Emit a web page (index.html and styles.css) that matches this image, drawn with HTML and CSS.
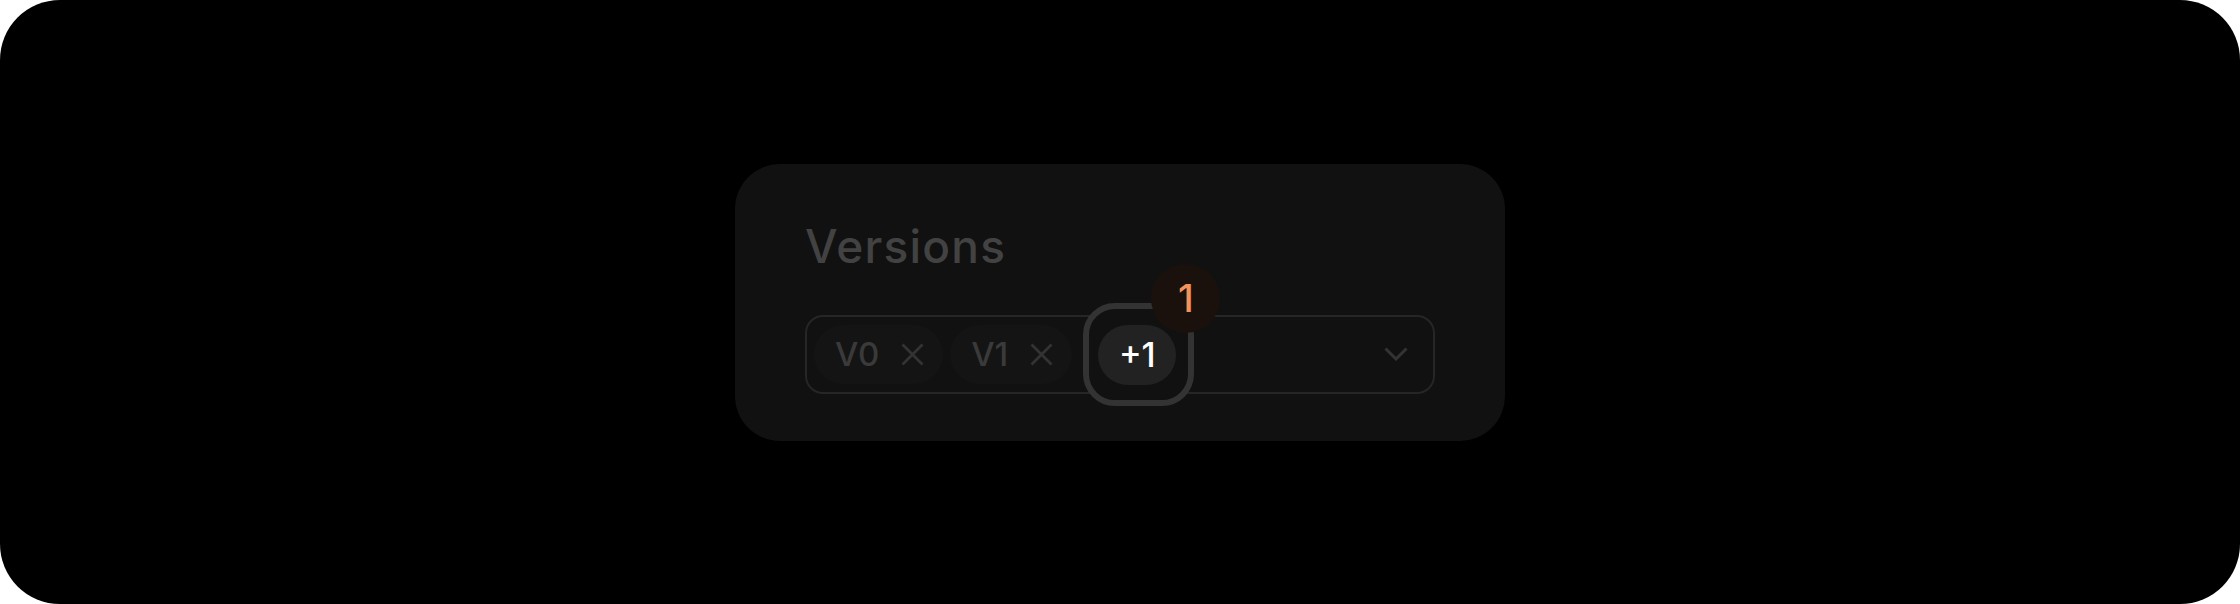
FILE: index.html
```html
<!DOCTYPE html>
<html lang="en">
<head>
<meta charset="utf-8">
<title>Versions</title>
<link rel="stylesheet" href="styles.css">
</head>
<body>
<div class="frame">
  <div class="card">
    <div class="title">Versions</div>
    <div class="field">
      <div class="chip">
        <span class="chip-label">V0</span>
        <svg class="chip-x" width="23" height="23" viewBox="0 0 23 23"><path d="M1.5 1.5 L21.5 21.5 M21.5 1.5 L1.5 21.5"/></svg>
      </div>
      <div class="chip">
        <span class="chip-label">V1</span>
        <svg class="chip-x" width="23" height="23" viewBox="0 0 23 23"><path d="M1.5 1.5 L21.5 21.5 M21.5 1.5 L1.5 21.5"/></svg>
      </div>
      <div class="more-ring">
        <div class="more">+1</div>
        <div class="badge">1</div>
      </div>
      <svg class="chevron" width="24" height="14" viewBox="0 0 24 14"><polyline points="1.5,1.5 12,12 22.5,1.5"/></svg>
    </div>
  </div>
</div>
</body>
</html>
```
FILE: styles.css
```css
html, body {
  margin: 0;
  padding: 0;
  background: #ffffff;
}
body {
  font-family: "Inter", "Noto Sans", sans-serif;
}
.frame {
  width: 2240px;
  height: 604px;
  background: #000000;
  border-radius: 60px;
  display: flex;
  align-items: center;
  justify-content: center;
}
.card {
  box-sizing: border-box;
  width: 770px;
  height: 277px;
  background: #111111;
  border-radius: 45px;
  padding: 54px 70px 47px 70px;
}
.title {
  font-size: 46px;
  font-weight: 500;
  line-height: 56px;
  color: #424242;
  letter-spacing: 1.2px;
  margin-bottom: 41px;
}
.field {
  box-sizing: border-box;
  height: 79px;
  border: 2px solid #262626;
  border-radius: 18px;
  display: flex;
  align-items: center;
  padding: 0 25px 0 7px;
}
.chip {
  height: 59px;
  box-sizing: border-box;
  display: flex;
  align-items: center;
  gap: 22px;
  padding: 0 19px 0 21px;
  background: #141414;
  border-radius: 30px;
  margin-right: 7px;
}
.chip-label {
  font-size: 33px;
  font-weight: 500;
  color: #3a3a3a;
  line-height: 1;
}
.chip-x path {
  stroke: #333333;
  stroke-width: 2.7;
  fill: none;
}
.more-ring {
  position: relative;
  box-sizing: border-box;
  width: 111px;
  height: 103px;
  flex: none;
  margin-left: 4px;
  border: 6px solid #333333;
  border-radius: 32px;
  background: #111111;
  padding: 16px 12px 15px 9px;
}
.more {
  width: 78px;
  height: 60px;
  border-radius: 30px;
  background: #222222;
  color: #ffffff;
  font-size: 34px;
  font-weight: 500;
  display: flex;
  align-items: center;
  justify-content: center;
}
.badge {
  position: absolute;
  left: 62px;
  top: -45px;
  width: 69px;
  height: 69px;
  border-radius: 50%;
  background: #1b110c;
  color: #f2935a;
  font-size: 38px;
  font-weight: 500;
  display: flex;
  align-items: center;
  justify-content: center;
}
.chevron {
  margin-left: auto;
}
.chevron polyline {
  fill: none;
  stroke: #333333;
  stroke-width: 3;
}
```
